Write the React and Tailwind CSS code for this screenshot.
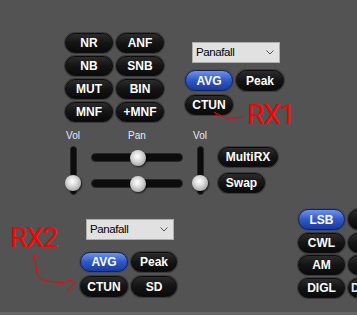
import React from "react";

const font = { fontFamily: '"Liberation Sans", Arial, sans-serif' };

function Btn({ children, w = "w-[48px]", h = "h-[20px]", blue = false, align = "justify-center" }) {
  return (
    <div
      className={`${w} ${h} shrink-0 rounded-full flex items-center ${align} text-white font-bold text-[12px] leading-none border overflow-hidden ${
        blue
          ? "bg-gradient-to-b from-[#6f93ea] via-[#3058c6] to-[#1c3a9c] border-[#14224f] shadow-[0_0_0_1px_#3d4a6a]"
          : "bg-gradient-to-b from-[#2c2c2c] via-[#141414] to-[#0a0a0a] border-[#0c0c0c] shadow-[0_0_0_1px_#3a3a3a]"
      }`}
      style={font}
    >
      {children}
    </div>
  );
}

function Dropdown({ className = "" }) {
  return (
    <div
      className={`w-[88px] h-[21px] bg-[#e1e1e1] border border-[#adadad] flex items-center justify-between pl-[3px] pr-[5px] text-black text-[11.5px] ${className}`}
      style={font}
    >
      <span className="tracking-[-0.4px]">Panafall</span>
      <svg width="8" height="5" viewBox="0 0 8 5">
        <path d="M0.5 0.5 L4 4 L7.5 0.5" fill="none" stroke="#555" strokeWidth="1" />
      </svg>
    </div>
  );
}

function Knob() {
  return (
    <div className="w-[16px] h-[16px] rounded-full bg-[radial-gradient(circle_at_45%_40%,#ffffff_0%,#dcdcdc_35%,#a8a8a8_75%,#7a7a7a_100%)] shadow-[1px_1px_2px_rgba(0,0,0,0.7)]" />
  );
}

function Label({ children }) {
  return (
    <div className="h-[12px] text-[10px] leading-[12px] text-[#e4ecff]" style={font}>
      {children}
    </div>
  );
}

function VSlider() {
  return (
    <div className="w-[20px] flex flex-col items-center">
      <Label>Vol</Label>
      <div className="mt-[4px] relative w-[7px] h-[49px] rounded-full bg-[#0c0c0c] border border-[#262626]">
        <div className="absolute left-1/2 -translate-x-1/2 top-[28px]">
          <Knob />
        </div>
      </div>
    </div>
  );
}

function HTrack() {
  return (
    <div className="relative w-[92px] h-[9px] rounded-full bg-[#0c0c0c] border border-[#262626]">
      <div className="absolute top-1/2 -translate-y-1/2 left-[38px]">
        <Knob />
      </div>
    </div>
  );
}

export default function App() {
  return (
    <div className="relative w-[357px] h-[315px] bg-[#535353] overflow-hidden flex flex-col">
      {/* Top section */}
      <div className="flex pt-[33px] pl-[65px]">
        <div className="grid grid-cols-[48px_48px] gap-x-[3px] gap-y-[3px]">
          <Btn>NR</Btn>
          <Btn>ANF</Btn>
          <Btn>NB</Btn>
          <Btn>SNB</Btn>
          <Btn>MUT</Btn>
          <Btn>BIN</Btn>
          <Btn>MNF</Btn>
          <Btn>+MNF</Btn>
        </div>
        <div className="ml-[21px] mt-[9px] flex flex-col">
          <Dropdown className="ml-[7px] h-[20px]" />
          <div className="mt-[7px] flex gap-[3px]">
            <Btn h="h-[21px]" blue>AVG</Btn>
            <Btn h="h-[21px]">Peak</Btn>
          </div>
          <div className="mt-[4px] flex">
            <Btn>CTUN</Btn>
          </div>
        </div>
      </div>

      {/* Slider section */}
      <div className="flex mt-[8px] pl-[63px]">
        <VSlider />
        <div className="ml-[8px] w-[92px] flex flex-col items-center">
          <Label>Pan</Label>
          <div className="mt-[11px]">
            <HTrack />
          </div>
          <div className="mt-[17px]">
            <HTrack />
          </div>
        </div>
        <div className="ml-[7px]">
          <VSlider />
        </div>
        <div className="ml-[8px] mt-[17px] flex flex-col gap-[6px]">
          <Btn w="w-[60px]">MultiRX</Btn>
          <Btn w="w-[47px]">Swap</Btn>
        </div>
      </div>

      {/* Bottom section */}
      <div className="flex mt-[14px]">
        <div className="pl-[80px] mt-[10px] flex flex-col">
          <Dropdown className="ml-[6px]" />
          <div className="mt-[12px] flex gap-[3px]">
            <Btn blue>AVG</Btn>
            <Btn w="w-[46px]">Peak</Btn>
          </div>
          <div className="mt-[4px] flex gap-[3px]">
            <Btn h="h-[21px]">CTUN</Btn>
            <Btn w="w-[46px]" h="h-[21px]">SD</Btn>
          </div>
        </div>
        <div className="ml-[121px] grid grid-cols-[47px_47px] gap-x-[3px] gap-y-[2.5px] shrink-0">
          <Btn w="w-[47px]" h="h-[21px]" blue>LSB</Btn>
          <Btn w="w-[47px]" h="h-[21px]" />
          <Btn w="w-[47px]">CWL</Btn>
          <Btn w="w-[47px]" />
          <Btn w="w-[47px]">AM</Btn>
          <Btn w="w-[47px]" />
          <Btn w="w-[47px]">DIGL</Btn>
          <Btn w="w-[47px]" align="justify-start pl-[2px]">
            <span className="text-[#dce8ff]">DIGU</span>
          </Btn>
        </div>
      </div>

      <div className="mt-auto h-[3px] bg-[#666666]" />

      {/* Annotations */}
      <div
        className="absolute left-[247px] top-[99px] text-[28px] leading-[32px] text-[#ff0000] tracking-[-1px]"
        style={{ fontFamily: 'Roboto, "Liberation Sans", sans-serif' }}
      >
        RX1
      </div>
      <div
        className="absolute left-[10px] top-[222px] text-[28px] leading-[32px] text-[#ff0000] tracking-[-1px]"
        style={{ fontFamily: 'Roboto, "Liberation Sans", sans-serif' }}
      >
        RX2
      </div>
      <svg className="absolute left-0 top-0 pointer-events-none" width="357" height="315">
        <path
          d="M243 117 L232 118.5 Q223 118 220 115 L217 113.5 M214 112 L216 113 L216.5 116"
          fill="none"
          stroke="#ff0000"
          strokeWidth="1"
        />
        <path
          d="M34 254 L37 272 Q38 279 47 281 L65 283 M67 280 L75 282 L68 291"
          fill="none"
          stroke="#ff0000"
          strokeWidth="1"
        />
      </svg>
    </div>
  );
}
